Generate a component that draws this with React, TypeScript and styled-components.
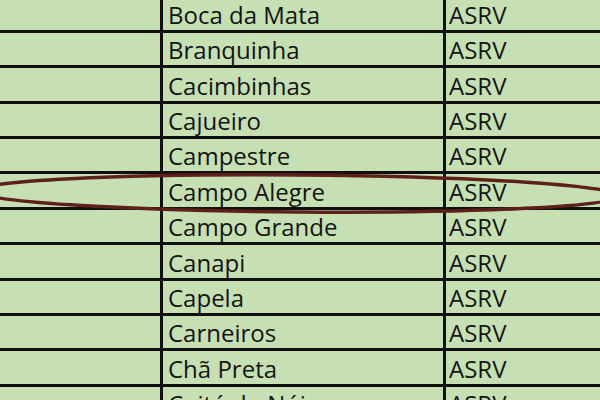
import React from 'react';
import styled, { createGlobalStyle } from 'styled-components';

const GlobalStyle = createGlobalStyle`
  html, body {
    margin: 0;
    padding: 0;
    width: 600px;
    height: 400px;
    overflow: hidden;
    background: #c6e0b4;
  }
`;

const Sheet = styled.div`
  position: relative;
  width: 600px;
  height: 400px;
  overflow: hidden;
  background: #c6e0b4;
  font-family: "Open Sans", "Liberation Sans", sans-serif;
  color: #141414;
`;

const Rows = styled.div`
  display: flex;
  flex-direction: column;
  margin-top: -2.6px;
`;

const Row = styled.div`
  display: grid;
  grid-template-columns: 160px 283px 1fr;
  height: 35.4px;
  box-sizing: border-box;
  border-bottom: 3px solid #101010;
  flex-shrink: 0;
`;

const Cell = styled.div<{ $pad?: number }>`
  display: flex;
  align-items: flex-end;
  box-sizing: border-box;
  padding-left: ${p => p.$pad ?? 0}px;
  padding-bottom: 1px;
  font-size: 24px;
  line-height: 28px;
  white-space: nowrap;
  & + & {
    border-left: 3px solid #101010;
  }
`;

const Ring = styled.svg`
  position: absolute;
  left: 0;
  top: 0;
  pointer-events: none;
`;

const towns = [
  'Boca da Mata',
  'Branquinha',
  'Cacimbinhas',
  'Cajueiro',
  'Campestre',
  'Campo Alegre',
  'Campo Grande',
  'Canapi',
  'Capela',
  'Carneiros',
  'Chã Preta',
  'Coité do Nóia',
];

export default function App() {
  return (
    <Sheet>
      <GlobalStyle />
      <Rows>
        {towns.map(t => (
          <Row key={t}>
            <Cell />
            <Cell $pad={5}>{t}</Cell>
            <Cell $pad={3}>ASRV</Cell>
          </Row>
        ))}
      </Rows>
      <Ring width="600" height="400" viewBox="0 0 600 400">
        <ellipse
          cx="298"
          cy="193.5"
          rx="322"
          ry="18.5"
          fill="none"
          stroke="#5e2019"
          strokeWidth="3.5"
          transform="rotate(0.45 298 193.5)"
        />
      </Ring>
    </Sheet>
  );
}
